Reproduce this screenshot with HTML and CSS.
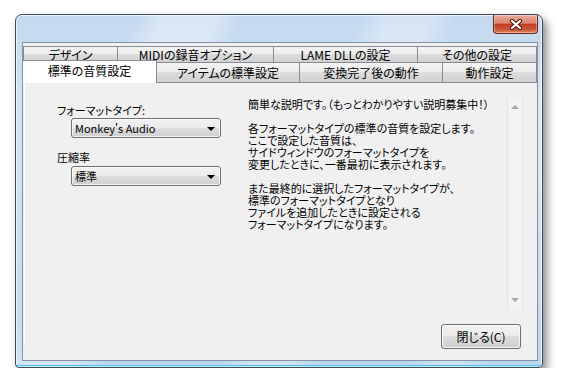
FILE: index.html
```html
<!DOCTYPE html>
<html lang="ja">
<head>
    <meta charset="UTF-8">
    <title>設定</title>
    <link rel="stylesheet" href="styles.css">
</head>
<body>
    <div class="window">
        <div class="titlebar">
            <div class="close-btn">
                <svg width="14" height="11" viewBox="0 0 14 11">
                    <path d="M3 2 L11 9 M11 2 L3 9" stroke="#4a1a12" stroke-width="4.2" stroke-linecap="round"/>
                    <path d="M3 2 L11 9 M11 2 L3 9" stroke="#fff" stroke-width="2.2" stroke-linecap="round"/>
                </svg>
            </div>
        </div>
        <div class="client">
            <div class="tab-row">
                <div class="tab t-design">デザイン</div>
                <div class="tab t-midi">MIDIの録音オプション</div>
                <div class="tab t-lame">LAME DLLの設定</div>
                <div class="tab t-other">その他の設定</div>
            </div>
            <div class="tab-row front">
                <div class="tab t-quality selected">標準の音質設定</div>
                <div class="tab t-item">アイテムの標準設定</div>
                <div class="tab t-after">変換完了後の動作</div>
                <div class="tab t-action">動作設定</div>
            </div>
            <div class="panel">
                <div class="page-body">
                    <div class="settings">
                        <div class="field-label">フォーマットタイプ:</div>
                        <div class="combo"><span>Monkey's Audio</span><span class="arrow"></span></div>
                        <div class="field-label second">圧縮率</div>
                        <div class="combo"><span>標準</span><span class="arrow"></span></div>
                    </div>
                    <div class="description">
                        <div class="desc-text">
                            <p>簡単な説明です。（もっとわかりやすい説明募集中！）</p>
                            <p>各フォーマットタイプの標準の音質を設定します。<br>ここで設定した音質は、<br>サイドウィンドウのフォーマットタイプを<br>変更したときに、一番最初に表示されます。</p>
                            <p>また最終的に選択したフォーマットタイプが、<br>標準のフォーマットタイプとなり<br>ファイルを追加したときに設定される<br>フォーマットタイプになります。</p>
                        </div>
                        <div class="scrollbar">
                            <span class="scroll-up"></span>
                            <span class="scroll-down"></span>
                        </div>
                    </div>
                </div>
                <div class="actions">
                    <div class="btn">閉じる(C)</div>
                </div>
            </div>
        </div>
    </div>
</body>
</html>
```

FILE: styles.css
```css
body {
    margin: 0;
    background: #fff;
    font-family: "Noto Sans CJK JP", "Liberation Sans", sans-serif;
    font-size: 11px;
    font-feature-settings: "palt";
    color: #000;
}

.window {
    box-sizing: border-box;
    width: 528px;
    height: 354px;
    margin: 14px 0 0 15px;
    padding: 0 4px 6px 6px;
    display: flex;
    flex-direction: column;
    border: 1px solid #3e4a58;
    border-radius: 7px 7px 4px 4px;
    background:
        linear-gradient(112deg, rgba(255,255,255,0) 0 18%, rgba(255,255,255,.35) 22% 30%, rgba(255,255,255,0) 34% 52%, rgba(255,255,255,.3) 56% 62%, rgba(255,255,255,0) 66% 80%, rgba(255,255,255,.25) 84% 88%, rgba(255,255,255,0) 92%),
        linear-gradient(#c4d9ef, #d3e4f5 30%, #c8dcf1 80%, #bcd6ef);
    box-shadow:
        inset 0 0 0 1px rgba(255,255,255,.7),
        inset 0 -2px 0 #48c5ef,
        4px 5px 9px rgba(0,0,0,.45);
}

.titlebar {
    height: 27px;
    display: flex;
    justify-content: flex-end;
}

.close-btn {
    box-sizing: border-box;
    width: 45px;
    height: 19px;
    display: flex;
    align-items: center;
    justify-content: center;
    border: 1px solid #6a281c;
    border-top: none;
    border-radius: 0 0 4px 4px;
    background: linear-gradient(#e8ab9c, #d98470 45%, #c23e22 52%, #c9563a 80%, #e0875e);
    box-shadow: inset 0 0 0 1px rgba(255,255,255,.35);
}

.client {
    box-sizing: border-box;
    width: 516px;
    flex: 1;
    display: flex;
    flex-direction: column;
    padding-top: 3px;
    border: 1px solid #8291a5;
    background: #f0f0f0;
}

.tab-row {
    display: flex;
    align-items: flex-start;
}

.tab {
    box-sizing: border-box;
    height: 16px;
    line-height: 15px;
    font-size: 12px;
    text-align: center;
    white-space: nowrap;
    border: 1px solid #898c95;
    border-left: none;
    border-bottom: none;
    background: linear-gradient(#f3f3f3, #ebebeb 50%, #dddddd 50%, #d1d1d1);
}

.tab:first-child {
    border-left: 1px solid #898c95;
}

.front .tab {
    height: 20px;
    line-height: 19px;
}

.t-design { width: 95px; }
.t-midi { width: 156px; }
.t-lame { width: 144px; }
.t-other { width: 119px; }
.t-quality { width: 134px; }
.t-item { width: 143px; }
.t-after { width: 143px; }
.t-action { width: 94px; }

.front .tab.selected {
    position: relative;
    z-index: 1;
    width: 135px;
    height: 23px;
    line-height: 19px;
    margin: -2px 0 -1px -1px;
    background: #fff;
}

.panel {
    flex: 1;
    display: flex;
    flex-direction: column;
    border-top: 1px solid #898c95;
    background: linear-gradient(#fff, #fff) 1px 0 / 1px calc(100% - 15px) no-repeat, #f0f0f0;
}

.page-body {
    display: grid;
    grid-template-columns: 188px 278px;
    padding-left: 34px;
}

.settings {
    padding-top: 21px;
}

.field-label {
    line-height: 12px;
}

.field-label.second {
    margin-top: 13px;
}

.combo {
    box-sizing: border-box;
    width: 150px;
    height: 20px;
    margin: 2px 0 0 14px;
    padding: 0 5px 0 3px;
    display: flex;
    align-items: center;
    justify-content: space-between;
    border: 1px solid #707070;
    border-radius: 3px;
    background: linear-gradient(#f2f2f2, #ebebeb 50%, #dddddd 50%, #cfcfcf);
    box-shadow: inset 0 0 0 1px rgba(255,255,255,.75);
}

.field-label.second + .combo {
    margin-top: 3px;
}

.arrow {
    width: 0;
    height: 0;
    border-left: 4px solid transparent;
    border-right: 4px solid transparent;
    border-top: 4px solid #000;
    margin-top: 1px;
}

.description {
    margin-top: 15px;
    height: 211px;
    display: flex;
}

.desc-text {
    flex: 1;
    padding-left: 3px;
    line-height: 12px;
    white-space: nowrap;
}

.desc-text p {
    margin: 0 0 12px;
}

.scrollbar {
    box-sizing: border-box;
    width: 16px;
    display: flex;
    flex-direction: column;
    justify-content: space-between;
    align-items: center;
    padding: 7px 0 7px;
    border-left: 1px solid #e2e2e2;
    border-right: 1px solid #e6e6e6;
    background: #f3f3f3;
}

.scroll-up,
.scroll-down {
    width: 0;
    height: 0;
    border-left: 4px solid transparent;
    border-right: 4px solid transparent;
}

.scroll-up {
    border-bottom: 4px solid #a6a6a6;
}

.scroll-down {
    border-top: 4px solid #a6a6a6;
}

.actions {
    margin-top: auto;
    padding: 0 16px 11px 0;
    display: flex;
    justify-content: flex-end;
}

.btn {
    box-sizing: border-box;
    width: 80px;
    height: 25px;
    line-height: 23px;
    text-align: center;
    font-size: 12px;
    border: 1px solid #707070;
    border-radius: 3px;
    background: linear-gradient(#f2f2f2, #ebebeb 50%, #dddddd 50%, #cfcfcf);
    box-shadow: inset 0 0 0 1px rgba(255,255,255,.75);
}
```
